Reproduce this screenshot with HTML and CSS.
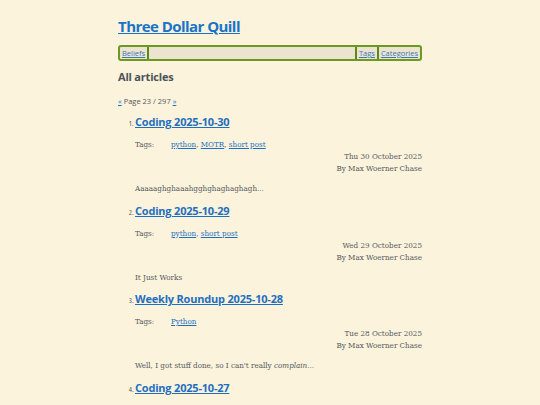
FILE: index.html
```html
<!DOCTYPE html>
<html>
<head>
<meta charset="utf-8">
<link rel="stylesheet" href="styles.css">
</head>
<body>
<div class="page">
  <header class="site-header">
    <h1 class="site-title"><a href="#">Three Dollar Quill</a></h1>
    <nav class="nav">
      <a class="nav-link" href="#">Beliefs</a>
      <span class="nav-spacer"></span>
      <a class="nav-link sep" href="#">Tags</a>
      <a class="nav-link sep" href="#">Categories</a>
    </nav>
  </header>
  <main>
    <h2 class="section-title">All articles</h2>
    <p class="pager"><a href="#">«</a> Page 23 / 297 <a href="#">»</a></p>
    <ol class="articles" start="1">
      <li class="article">
        <h3 class="article-title"><a href="#">Coding 2025-10-30</a></h3>
        <div class="tags"><span class="tags-label">Tags:</span><span class="tags-list"><a href="#">python</a>, <a href="#">MOTR</a>, <a href="#">short post</a></span></div>
        <div class="meta"><div>Thu 30 October 2025</div><div>By Max Woerner Chase</div></div>
        <p class="summary">Aaaaaghghaaahgghghaghaghagh...</p>
      </li>
      <li class="article">
        <h3 class="article-title"><a href="#">Coding 2025-10-29</a></h3>
        <div class="tags"><span class="tags-label">Tags:</span><span class="tags-list"><a href="#">python</a>, <a href="#">short post</a></span></div>
        <div class="meta"><div>Wed 29 October 2025</div><div>By Max Woerner Chase</div></div>
        <p class="summary">It Just Works</p>
      </li>
      <li class="article">
        <h3 class="article-title"><a href="#">Weekly Roundup 2025-10-28</a></h3>
        <div class="tags"><span class="tags-label">Tags:</span><span class="tags-list"><a href="#">Python</a></span></div>
        <div class="meta"><div>Tue 28 October 2025</div><div>By Max Woerner Chase</div></div>
        <p class="summary">Well, I got stuff done, so I can't really <em>complain</em>...</p>
      </li>
      <li class="article">
        <h3 class="article-title"><a href="#">Coding 2025-10-27</a></h3>
        <div class="tags"><span class="tags-label">Tags:</span><span class="tags-list"><a href="#">python</a>, <a href="#">short post</a></span></div>
        <div class="meta"><div>Mon 27 October 2025</div><div>By Max Woerner Chase</div></div>
        <p class="summary">Something.</p>
      </li>
    </ol>
  </main>
</div>
</body>
</html>
```
FILE: styles.css
```css
html, body {
  margin: 0;
  padding: 0;
  background: #fbf3dc;
}
body {
  font-family: "DejaVu Serif Condensed", "DejaVu Serif", serif;
  font-stretch: condensed;
  color: #56595c;
  font-size: 8px;
}
a { color: #1f6fc0; }
.page {
  width: 304px;
  margin: 0 auto;
  padding-top: 15px;
}
.site-title {
  margin: 0;
  font-family: "Open Sans", sans-serif;
  font-stretch: normal;
  font-size: 15px;
  letter-spacing: -0.55px;
  font-weight: 700;
  line-height: 22px;
}
.site-title a { color: #1a73c8; }
.nav {
  display: flex;
  margin-top: 8px;
  border: 2px solid #6a9a22;
  border-radius: 3px;
  background: #ece4cf;
  height: 12px;
  align-items: center;
  font-family: "Open Sans", sans-serif;
  font-stretch: normal;
  font-size: 7.5px;
}
.nav-link {
  color: #3a78b8;
  padding: 0 2px;
  line-height: 12px;
}
.nav-link:first-child { border-right: 2px solid #5a8a1a; }
.nav-spacer { flex: 1; }
.nav-link.sep { border-left: 2px solid #5a8a1a; }
.section-title {
  margin: 8px 0 0;
  font-family: "Open Sans", sans-serif;
  font-stretch: normal;
  font-size: 11px;
  letter-spacing: -0.2px;
  font-weight: 700;
  color: #4c5257;
  line-height: 16px;
}
.pager {
  margin: 10px 0 0;
  font-family: "Open Sans", sans-serif;
  font-stretch: normal;
  font-size: 7.5px;
  line-height: 12px;
}
.articles {
  margin: 6px 0 0;
  padding-left: 17px;
}
.article::marker {
  font-family: "Open Sans", sans-serif;
  font-size: 7.5px;
}
.article-title {
  margin: 0;
  font-family: "Open Sans", sans-serif;
  font-stretch: normal;
  font-size: 11px;
  letter-spacing: -0.2px;
  font-weight: 700;
  line-height: 18px;
}
.tags {
  display: flex;
  margin-top: 8px;
  line-height: 12px;
}
.tags-label { width: 36px; }
.meta {
  text-align: right;
  line-height: 12px;
}
.summary {
  margin: 8px 0 6.5px;
  line-height: 12px;
}
```
